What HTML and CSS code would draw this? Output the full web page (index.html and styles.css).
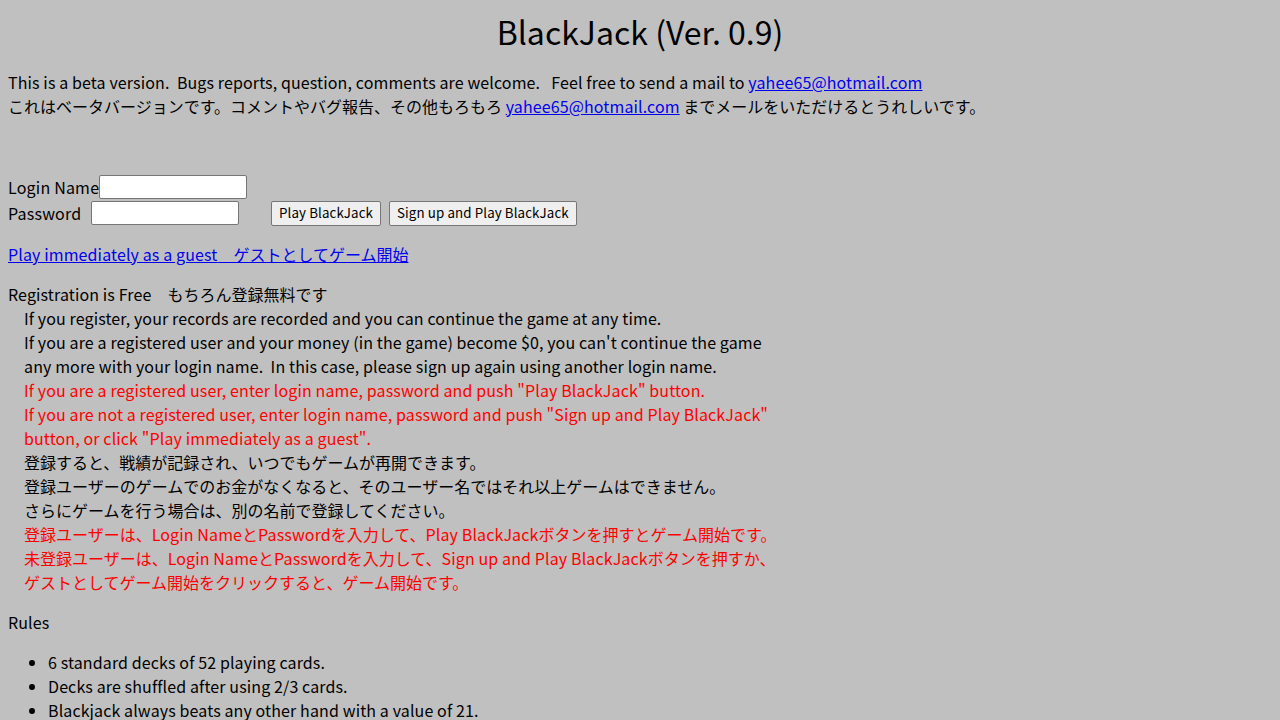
FILE: index.html
```html
<!DOCTYPE html>
<html lang="ja">
<head>
    <meta charset="UTF-8">
    <title>BlackJack (Ver. 0.9)</title>
    <link rel="stylesheet" href="styles.css">
</head>
<body>
    <h1>BlackJack (Ver. 0.9)</h1>
    <p class="intro">
        <span class="en">This is a beta version.&nbsp; Bugs reports, question, comments are welcome.&nbsp;&nbsp; Feel free to send a mail to <a href="mailto:yahee65@hotmail.com">yahee65@hotmail.com</a></span><br>
        これはベータバージョンです。コメントやバグ報告、その他もろもろ <a href="mailto:yahee65@hotmail.com" class="en">yahee65@hotmail.com</a> までメールをいただけるとうれしいです。
    </p>

    <form class="login">
        <div class="row">
            <label for="login" class="en">Login Name</label><input type="text" id="login">
        </div>
        <div class="row">
            <label for="pass" class="pass-label en">Password</label><input type="password" id="pass">
            <button type="button" class="play">Play BlackJack</button>
            <button type="button">Sign up and Play BlackJack</button>
        </div>
    </form>

    <p><a href="#"><span class="en">Play immediately as a guest</span>　ゲストとしてゲーム開始</a></p>

    <p class="reg-title"><span class="en">Registration is Free</span>　もちろん登録無料です</p>
    <div class="reg">
        <span class="en">If you register, your records are recorded and you can continue the game at any time.<br>
        If you are a registered user and your money (in the game) become $0, you can't continue the game<br>
        any more with your login name.&nbsp; In this case, please sign up again using another login name.</span><br>
        <span class="red en">If you are a registered user, enter login name, password and push "Play BlackJack" button.<br>
        If you are not a registered user, enter login name, password and push "Sign up and Play BlackJack"<br>
        button, or click "Play immediately as a guest".</span><br>
        登録すると、戦績が記録され、いつでもゲームが再開できます。<br>
        登録ユーザーのゲームでのお金がなくなると、そのユーザー名ではそれ以上ゲームはできません。<br>
        さらにゲームを行う場合は、別の名前で登録してください。<br>
        <span class="red">登録ユーザーは、<span class="en">Login Name</span>と<span class="en">Password</span>を入力して、<span class="en">Play BlackJack</span>ボタンを押すとゲーム開始です。<br>
        未登録ユーザーは、<span class="en">Login Name</span>と<span class="en">Password</span>を入力して、<span class="en">Sign up and Play BlackJack</span>ボタンを押すか、<br>
        ゲストとしてゲーム開始をクリックすると、ゲーム開始です。</span>
    </div>

    <p class="rules-title en">Rules</p>
    <ul class="rules en">
        <li>6 standard decks of 52 playing cards.</li>
        <li>Decks are shuffled after using 2/3 cards.</li>
        <li>Blackjack always beats any other hand with a value of 21.</li>
        <li>Dealer stands on all 17s.</li>
        <li>Double down on any first two cards.</li>
    </ul>
</body>
</html>
```

FILE: styles.css
```css
body {
    margin: 8px;
    background: #c0c0c0;
    color: #000;
    font-family: "Noto Sans CJK JP", sans-serif;
    font-size: 16px;
    line-height: 24px;
}

/* latin runs render a touch wider in the original */
.en {
    letter-spacing: 0.12px;
}

label.en {
    letter-spacing: 0.2px;
}

h1 {
    text-align: center;
    font-size: 32px;
    font-weight: normal;
    line-height: 46px;
    margin: 0 0 16px;
}

a {
    color: #0000ee;
}

p {
    margin: 16px 0;
}

.intro {
    margin: 0 0 56px;
}

.login {
    margin: 0;
}

.row {
    display: flex;
    align-items: center;
    height: 26px;
}

.row input {
    width: 148px;
    height: 24px;
    box-sizing: border-box;
    border: 1px solid #767676;
    border-radius: 2px;
    background: #fff;
    padding: 1px 2px;
    font-size: 13px;
}

.pass-label {
    width: 83px;
}

.row button {
    font-family: "Noto Sans CJK JP", sans-serif;
    font-size: 13.333px;
    letter-spacing: 0.1px;
    height: 25px;
    padding: 0 7px;
    margin-left: 8px;
    border: 1px solid #767676;
    border-radius: 2px;
    background: #efefef;
    color: #000;
    line-height: 20px;
}

.row button.play {
    margin-left: 32px;
}

.reg-title {
    margin-bottom: 0;
}

.reg {
    padding-left: 16px;
}

.red {
    color: #ff0000;
}

.rules-title {
    margin-top: 16px;
}

.rules {
    margin: 16px 0;
    padding-left: 40px;
}
```
